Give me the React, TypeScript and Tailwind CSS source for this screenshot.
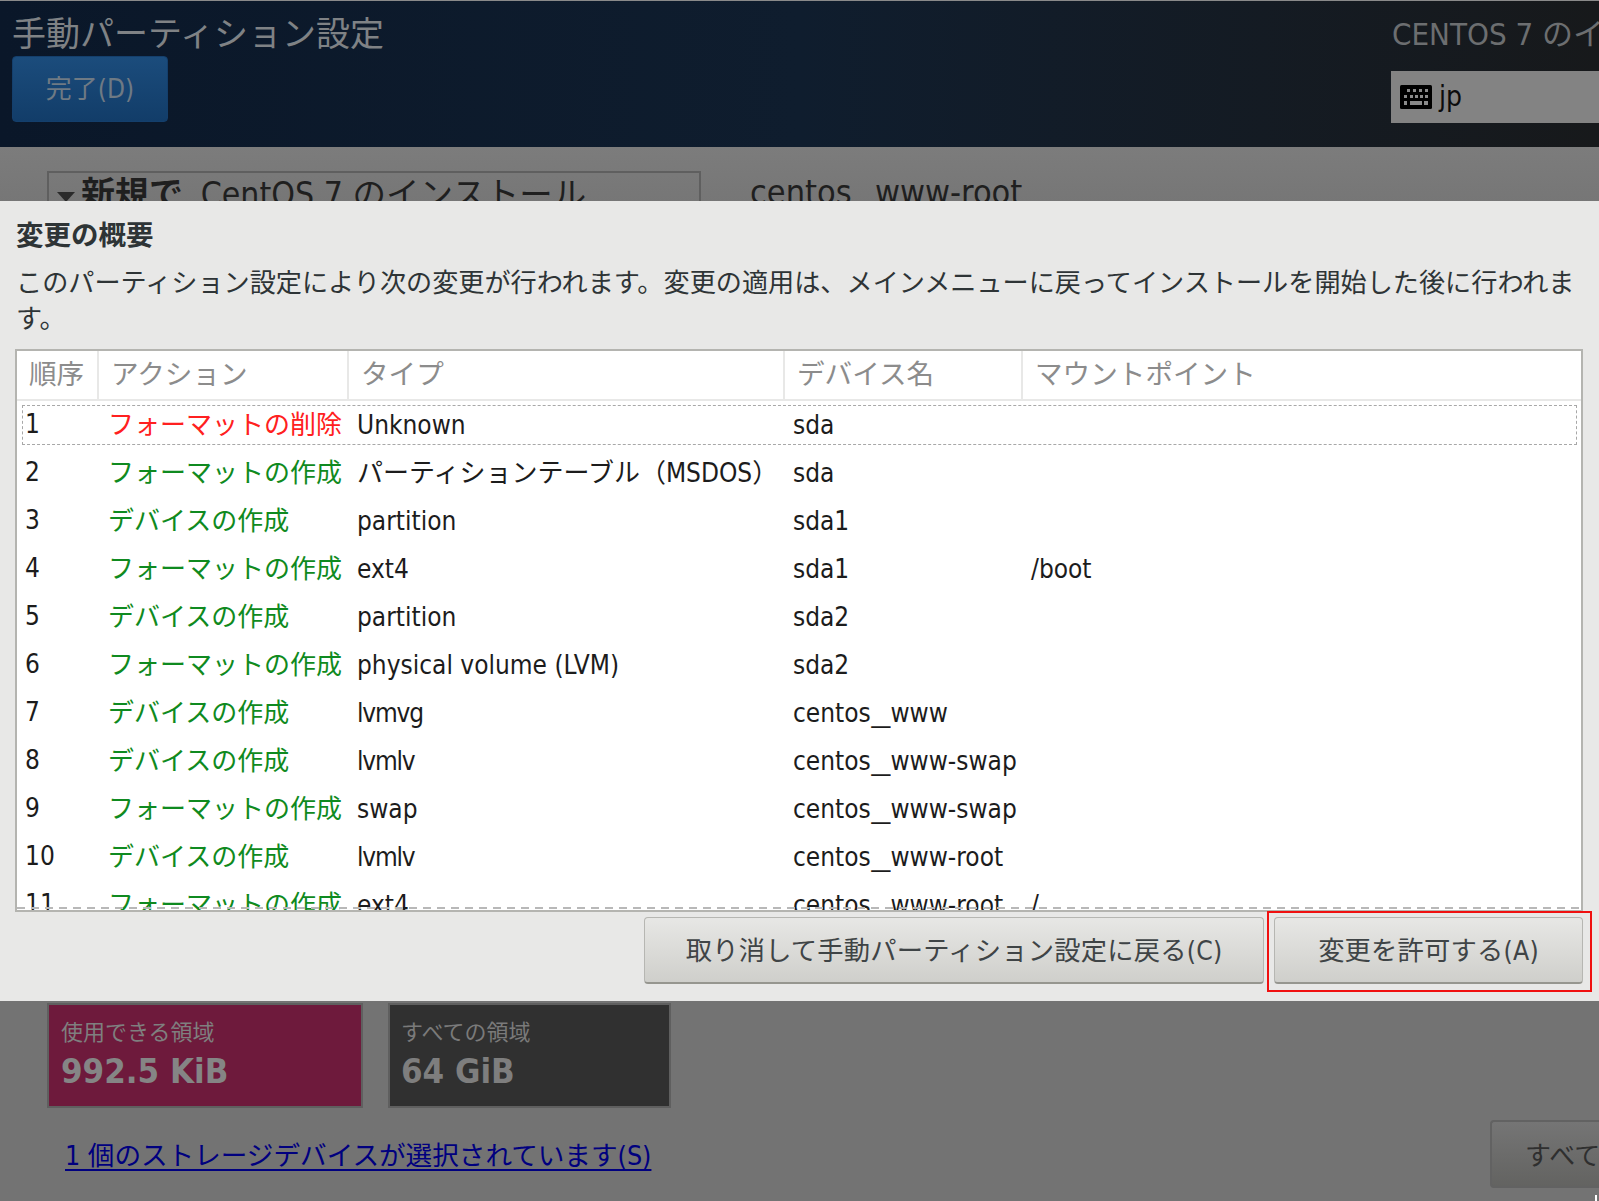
const rows = [
  ["1", "フォーマットの削除", "Unknown", "sda", ""],
  ["2", "フォーマットの作成", "パーティションテーブル（MSDOS）", "sda", ""],
  ["3", "デバイスの作成", "partition", "sda1", ""],
  ["4", "フォーマットの作成", "ext4", "sda1", "/boot"],
  ["5", "デバイスの作成", "partition", "sda2", ""],
  ["6", "フォーマットの作成", "physical volume (LVM)", "sda2", ""],
  ["7", "デバイスの作成", "lvmvg", "centos_www", ""],
  ["8", "デバイスの作成", "lvmlv", "centos_www-swap", ""],
  ["9", "フォーマットの作成", "swap", "centos_www-swap", ""],
  ["10", "デバイスの作成", "lvmlv", "centos_www-root", ""],
  ["11", "フォーマットの作成", "ext4", "centos_www-root", "/"],
];

const headers = ["順序", "アクション", "タイプ", "デバイス名", "マウントポイント"];

function KeyboardIcon() {
  const keys: [number, number, number][] = [
    [7, 4, 3], [13, 4, 3], [19, 4, 3], [25, 4, 3],
    [4, 10, 3], [10, 10, 3], [15, 10, 3], [20, 10, 3], [25, 10, 3],
    [4, 16, 3], [10, 16, 12], [24, 16, 4],
  ];
  return (
    <svg width="32" height="24" viewBox="0 0 32 24" className="shrink-0">
      <rect x="0" y="0" width="32" height="24" rx="1.5" fill="#000" />
      {keys.map(([x, y, w], i) => (
        <rect key={i} x={x} y={y} width={w} height={y === 16 ? 4 : 3} fill="#8a8a8a" />
      ))}
    </svg>
  );
}

function Device({ name }: { name: string }) {
  const parts = name.split("_");
  if (parts.length < 2) return <>{name}</>;
  return (
    <>
      {parts[0]}
      <span className="inline-block mx-[4px] scale-x-[1.6]">_</span>
      {parts[1]}
    </>
  );
}

export default function App() {
  return (
    <div className="relative w-[1599px] h-[1201px] overflow-hidden bg-[#737373] [font-family:'DejaVu_Sans_Condensed','DejaVu_Sans','Noto_Sans_CJK_JP',sans-serif]">
      {/* Header */}
      <header className="h-[147px] flex justify-between border-t border-[#8a8a8a] bg-gradient-to-r from-[#0a1729] via-[#0f1d2e] to-[#17191b]">
        <div className="pl-3 pt-[14px] flex flex-col items-start">
          <h1 className="text-[34px] leading-[38px] text-[#7f8285] whitespace-nowrap">手動パーティション設定</h1>
          <button className="mt-[3px] w-[156px] h-[66px] rounded-[4px] bg-gradient-to-b from-[#1b4c7c] to-[#123d69] border border-[#143f6c] text-[26px] leading-none text-[#6f7a84]">
            完了(D)
          </button>
        </div>
        <div className="w-[208px] shrink-0 overflow-hidden pt-[15px]">
          <div className="pl-[1px] text-[31px] leading-[36px] text-[#6c6e70] whitespace-nowrap">CENTOS 7 のインストール</div>
          <div className="mt-[19px] h-[52px] bg-[#838383] flex items-center gap-[7px] pl-[9px]">
            <KeyboardIcon />
            <span className="text-[28px] leading-none text-[#0c0c0c]">jp</span>
          </div>
        </div>
      </header>

      {/* Dimmed page */}
      <main className="h-[1054px] bg-gradient-to-b from-[#7c7c7c] to-[#737373] to-[8%] pt-[24px] pl-[47px]">
        <div className="flex items-start h-[832px]">
          <div className="w-[654px] h-[60px] border-2 border-b-0 border-[#5f5f5f] flex items-start gap-[6px] pl-[8px] pt-[1px] text-[34px] leading-[40px] text-[#1f1f1f] whitespace-nowrap">
            <svg width="18" height="10" viewBox="0 0 18 10" className="mt-[18px] shrink-0">
              <path d="M0 0 H18 L9 10 Z" fill="#2b2b2b" />
            </svg>
            <span><b>新規で</b> <span className="ml-[8px] text-[33.5px]">CentOS 7 のインストール</span></span>
          </div>
          <div className="ml-[49px] pt-[1px] text-[34px] leading-[40px] text-[#1f1f1f]"><Device name="centos_www-root" /></div>
        </div>
        <div className="flex gap-[25px]">
          <div className="w-[316px] h-[105px] bg-[#6e1a3c] border-2 border-[#5f5f5f] pl-[12px] pt-[15px]">
            <div className="text-[22px] leading-[26px] text-[#7f7f7f]">使用できる領域</div>
            <div className="mt-[4px] text-[34.5px] leading-[42px] font-bold text-[#858585]">992.5 KiB</div>
          </div>
          <div className="w-[283px] h-[105px] bg-[#303030] border-2 border-[#5f5f5f] pl-[11px] pt-[15px]">
            <div className="text-[22px] leading-[26px] text-[#7a7a7a]">すべての領域</div>
            <div className="mt-[4px] text-[34.5px] leading-[42px] font-bold text-[#7e7e7e]">64 GiB</div>
          </div>
        </div>
        <div className="flex items-start justify-between mt-[12px]">
          <a className="mt-[19px] ml-[18px] text-[26.6px] leading-[33px] text-[#00007f] underline underline-offset-[4px] whitespace-nowrap">1 個のストレージデバイスが選択されています(S)</a>
          <button className="w-[109px] h-[68px] pt-1 rounded-l-[4px] border-2 border-r-0 border-[#626262] bg-gradient-to-b from-[#757575] to-[#636361] text-left pl-[33px] text-[26px] text-[#2f2f2f] whitespace-nowrap overflow-hidden">
            すべて再設定(R)
          </button>
        </div>
      </main>

      {/* Modal dialog */}
      <section className="absolute left-0 top-[201px] w-[1599px] h-[800px] bg-[#e8e8e7] pt-[17px] px-4 text-[#2e3436]">
        <h2 className="font-bold text-[27.5px] leading-[34px] text-[#2e3436]">変更の概要</h2>
        <p className="mt-[13px] text-[26.15px] leading-[36px] w-[1575px] text-[#2e3436]">
          このパーティション設定により次の変更が行われます。変更の適用は、メインメニューに戻ってインストールを開始した後に行われます。
        </p>
        <div className="relative -ml-[1px] mt-[12px] w-[1568px] h-[563px] border-2 border-[#b4b4b0] bg-white overflow-hidden">
          <div className="grid grid-cols-[82px_250px_436px_238px_1fr] h-[50px] border-b-2 border-[#e8e8e7]">
            {headers.map((h, i) => (
              <div key={h} className={`flex items-center pl-[12px] text-[27.6px] text-[#8c8c8c] ${i < 4 ? "border-r-2 border-[#e8e8e7]" : ""}`}>
                {h}
              </div>
            ))}
          </div>
          {rows.map((r, i) => (
            <div key={r[0]} className="relative grid grid-cols-[82px_250px_436px_238px_1fr] h-[48px] items-center text-[26px] leading-none whitespace-nowrap text-[#1c1c1c]">
              {i === 0 && <div className="absolute left-[5px] right-[4px] top-[4px] h-[40px] border border-dashed border-[#a8a8a8]" />}
              <div className="pl-[8px] -mt-[2px]">{r[0]}</div>
              <div className={`pl-[9px] ${i === 0 ? "text-[#ff2020]" : "text-[#0f8a20]"}`}>{r[1]}</div>
              <div className={`pl-[8px] ${r[2].startsWith("lv") ? "tracking-[-1.2px]" : ""}`}>{r[2]}</div>
              <div className="pl-[8px]"><Device name={r[3]} /></div>
              <div className="pl-[8px]">{r[4]}</div>
            </div>
          ))}
          <div className="absolute left-0 right-0 bottom-[1px] h-[2px] bg-[repeating-linear-gradient(90deg,#b8b8b8_0_8px,transparent_8px_14px)]" />
        </div>
        <div className="flex justify-end gap-[10px] mt-[5px]">
          <button className="w-[620px] h-[67px] pt-1 rounded-[4px] border border-[#b6b6b2] border-b-2 border-b-[#96968f] bg-gradient-to-b from-[#e7e7e5] to-[#cfcfcb] text-[26.3px] tracking-[0.2px] text-[#3f4446]">
            取り消して手動パーティション設定に戻る(C)
          </button>
          <button className="w-[309px] h-[67px] pt-1 rounded-[4px] border border-[#b6b6b2] border-b-2 border-b-[#96968f] bg-gradient-to-b from-[#e7e7e5] to-[#cfcfcb] text-[26.3px] tracking-[0.2px] text-[#3f4446]">
            変更を許可する(A)
          </button>
        </div>
        <div className="absolute left-[1267px] top-[710px] w-[325px] h-[81px] border-2 border-[#f01010]" />
      </section>

      <div className="absolute left-[1595px] top-[1195px] w-[2px] h-[6px] bg-white" />
    </div>
  );
}
